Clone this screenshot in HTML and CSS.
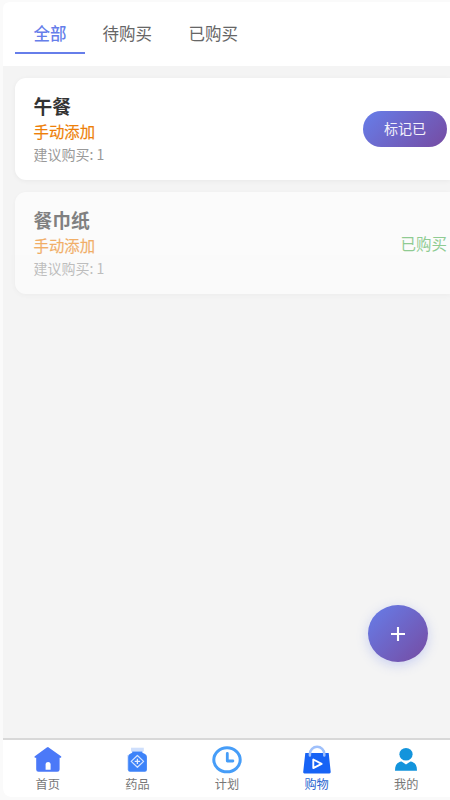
FILE: index.html
```html
<!DOCTYPE html>
<html lang="zh-CN">
<head>
<meta charset="utf-8">
<title>购物</title>
<link rel="stylesheet" href="styles.css">
</head>
<body>
<div class="app">
  <nav class="tabs">
    <span class="tab active">全部</span>
    <span class="tab">待购买</span>
    <span class="tab">已购买</span>
  </nav>
  <main class="list">
    <section class="card">
      <div class="info">
        <h2 class="name">午餐</h2>
        <p class="source">手动添加</p>
        <p class="advice">建议购买: 1</p>
      </div>
      <button class="mark">标记已</button>
    </section>
    <section class="card done">
      <div class="info">
        <h2 class="name">餐巾纸</h2>
        <p class="source">手动添加</p>
        <p class="advice">建议购买: 1</p>
      </div>
      <span class="bought">已购买</span>
    </section>
  </main>
  <button class="fab" aria-label="添加">
    <svg width="14" height="14" viewBox="0 0 14 14"><path d="M7 0v14M0 7h14" stroke="#fff" stroke-width="2.1"/></svg>
  </button>
  <footer class="bar">
    <div class="item">
      <svg width="30" height="30" viewBox="0 0 30 30"><path d="M15 3.1 28 12.3a.8.8 0 0 1-.5 1.4H26.6V25.5a2.3 2.3 0 0 1-2.3 2.3H5.5a2.3 2.3 0 0 1-2.3-2.3V13.7H2.3a.8.8 0 0 1-.5-1.4L13.8 3.5a2 2 0 0 1 2.4 0Z" fill="#4b79f8"/><path d="M12.6 25.8v-5.2a2.5 2.5 0 0 1 5 0v5.2Z" fill="#fff"/></svg>
      <span>首页</span>
    </div>
    <div class="item">
      <svg width="30" height="30" viewBox="0 0 30 30"><path d="M9 3.7h12.8v3.8H9Z" fill="#cfdffc"/><path d="M10.2 7.5h10.2v1.2l2.2 1.1q2.3 1 2.3 3V25.7q0 2-2 2H8q-2 0-2-2V12.8q0-2 2.2-3l2-1.1Z" fill="#3d83f9"/><path d="M5.8 11v15" stroke="#bad2fd" stroke-width=".8"/><path d="M15.4 11.5 21.6 17.4 15.4 23.3 9.2 17.4Z" fill="none" stroke="#d5e4ff" stroke-width="1.2" stroke-linejoin="round"/><path d="M15.4 14.8v5.2M12.7 17.4h5.4" stroke="#e5eeff" stroke-width="1.3"/></svg>
      <span>药品</span>
    </div>
    <div class="item">
      <svg width="30" height="30" viewBox="0 0 30 30"><ellipse cx="15" cy="15.8" rx="13.2" ry="12" fill="none" stroke="#469df8" stroke-width="3"/><path d="M15.3 9.5v7.5h5.6" fill="none" stroke="#469df8" stroke-width="2.8" stroke-linecap="round" stroke-linejoin="round"/></svg>
      <span>计划</span>
    </div>
    <div class="item current">
      <svg width="30" height="30" viewBox="0 0 30 30"><path d="M3.3 9h23.4l2 18.9q.1 1.5-1.3 1.5H2.4Q1 29.4 1.2 27.9Z" fill="#1763f5"/><path d="M7.9 11.5V9.9a7.2 7.1 0 0 1 14.4 0v1.6" fill="none" stroke="#9fc0fb" stroke-width="2.5" stroke-linecap="round"/><path d="M11.3 15.5v8.6l8.3-4.3Z" fill="none" stroke="#fff" stroke-width="1.9" stroke-linejoin="round"/></svg>
      <span>购物</span>
    </div>
    <div class="item">
      <svg width="30" height="30" viewBox="0 0 30 30"><ellipse cx="15" cy="10.2" rx="6.6" ry="6.3" fill="#1394dc"/><path d="M4 26.7C4 21 6 18.2 10.5 17.4L15 20.4 19.5 17.4C24 18.2 26 21 26 26.7Z" fill="#1394dc"/></svg>
      <span>我的</span>
    </div>
  </footer>
</div>
</body>
</html>
```
FILE: styles.css
```css
* { box-sizing: border-box; }
body {
  margin: 0;
  height: 800px;
  padding: 2px 0 3px 3px;
  overflow: hidden;
  background: #fafafa;
  font-family: "Noto Sans CJK SC", sans-serif;
}
h2, p { margin: 0; }
button { border: 0; padding: 0; font-family: inherit; }
.app {
  position: relative;
  display: flex;
  flex-direction: column;
  height: 795px;
  overflow: hidden;
  border-radius: 6px 0 0 8px;
  background: #f4f4f4;
}
.tabs {
  display: flex;
  height: 64px;
  padding: 12px;
  background: #fff;
}
.tab {
  height: 40px;
  padding: 0 19px 0 17.5px;
  border-bottom: 2px solid transparent;
  font-size: 16.5px;
  line-height: 38px;
  color: #666;
}
.active { padding: 0 18.5px; color: #667eea; border-color: #667eea; font-weight: 500; }
.list {
  flex: 1;
  display: flex;
  flex-direction: column;
  gap: 12px;
  padding: 12px 0 0 12px;
}
.card {
  display: flex;
  align-items: center;
  justify-content: space-between;
  height: 102px;
  padding: 0 3px 0 18.5px;
  border-radius: 11px 0 0 11px;
  background: #fff;
  box-shadow: 0 1px 5px rgba(0, 0, 0, .05);
}
.done { opacity: .6; }
.name { margin-bottom: 1px; font-size: 18.8px; line-height: 25px; font-weight: 700; color: #333; }
.source { font-size: 15.4px; line-height: 24px; color: #ee7f08; -webkit-text-stroke: .2px; }
.advice { font-size: 14px; line-height: 23px; color: #999; }
.mark {
  width: 84px;
  height: 36px;
  padding-bottom: 3px;
  border-radius: 19px;
  background: linear-gradient(135deg, #667eea, #764ba2);
  color: #f3f1fb;
  font-size: 14px;
}
.bought { font-size: 15.5px; color: #4caf50; }
.fab {
  position: absolute;
  left: 365px;
  top: 603px;
  display: flex;
  align-items: center;
  justify-content: center;
  width: 60px;
  height: 57px;
  border-radius: 50%;
  background: linear-gradient(135deg, #667eea, #764ba2);
  box-shadow: 0 3px 12px rgba(102, 126, 234, .3);
}
.bar {
  display: flex;
  height: 59px;
  border-top: 2px solid #d8d8d8;
  background: #fff;
}
.item {
  flex: 0 0 89.6px;
  display: flex;
  flex-direction: column;
  align-items: center;
  padding-top: 4px;
  font-size: 12.2px;
  line-height: 20px;
  color: #777;
}
.current { color: #2c66cf; }
```
